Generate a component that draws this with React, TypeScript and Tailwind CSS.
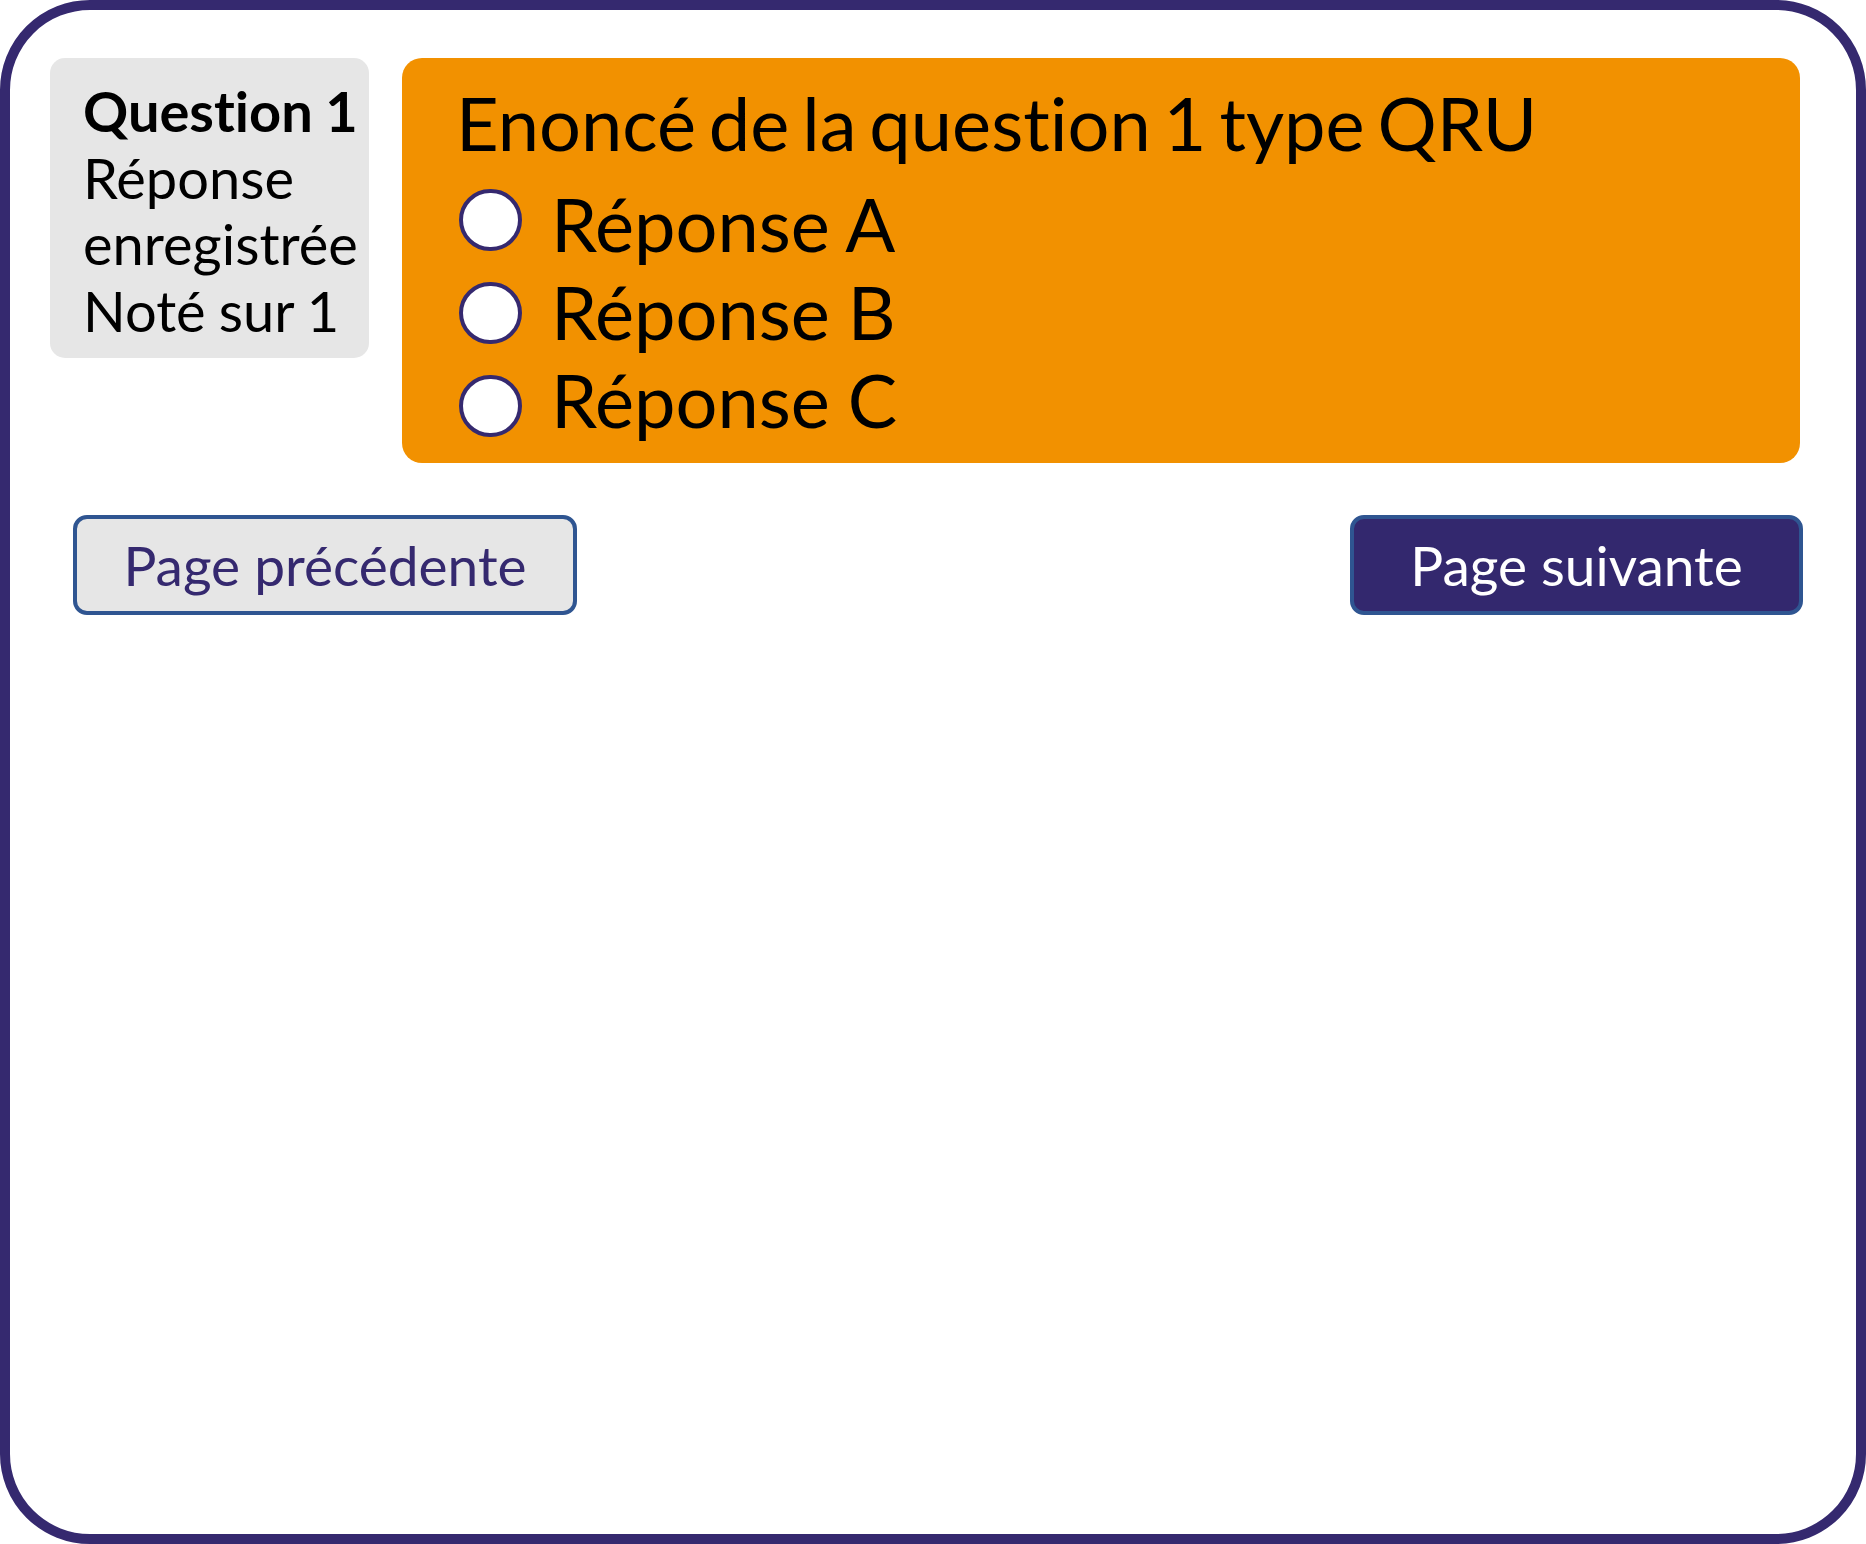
const answers = ["Réponse A", "Réponse B", "Réponse C"];

export default function App() {
    return (
        <div className="w-[1866px] h-[1544px] bg-white font-['Lato',sans-serif] [font-variant-ligatures:no-common-ligatures] [word-spacing:-0.07em]">
            <div className="w-full h-full border-[10px] border-[#35296f] rounded-[90px] pl-[40px] pr-[56px] pt-[48px]">
                <div className="flex items-start gap-[33px]">
                    <div className="w-[319px] h-[300px] shrink-0 bg-[#e6e6e6] rounded-[15px] pl-[33px] pt-[20px] text-[56px] leading-[66.5px] text-black">
                        <p className="font-bold">Question 1</p>
                        <p>Réponse</p>
                        <p>enregistrée</p>
                        <p>Noté sur 1</p>
                    </div>
                    <div className="flex-1 h-[405px] bg-[#f29100] rounded-[20px] pl-[54px] pt-[21px] text-black">
                        <h1 className="text-[74px] leading-[88px] [word-spacing:-0.082em]">Enoncé de la question 1 type QRU</h1>
                        <div className="mt-[13px] flex items-start gap-[29px]">
                            <div className="flex flex-col gap-[31px] mt-[9px] ml-[3px]">
                                {answers.map((answer) => (
                                    <span key={answer} className="w-[63px] h-[62px] rounded-full bg-white border-[4px] border-[#35296f]" />
                                ))}
                            </div>
                            <div className="flex flex-col">
                                {answers.map((answer) => (
                                    <span key={answer} className="text-[74px] leading-[88px]">{answer}</span>
                                ))}
                            </div>
                        </div>
                    </div>
                </div>
                <div className="flex justify-between items-center mt-[52px] ml-[23px] mr-[-3px]">
                    <button className="w-[504px] h-[100px] bg-[#e6e6e6] border-[4px] border-[#2f5591] rounded-[14px] text-[55px] leading-[66px] text-[#35296f]">
                        Page précédente
                    </button>
                    <button className="w-[453px] h-[100px] bg-[#33286e] border-[4px] border-[#2f5591] rounded-[14px] text-[55px] leading-[66px] text-white">
                        Page suivante
                    </button>
                </div>
            </div>
        </div>
    );
}
